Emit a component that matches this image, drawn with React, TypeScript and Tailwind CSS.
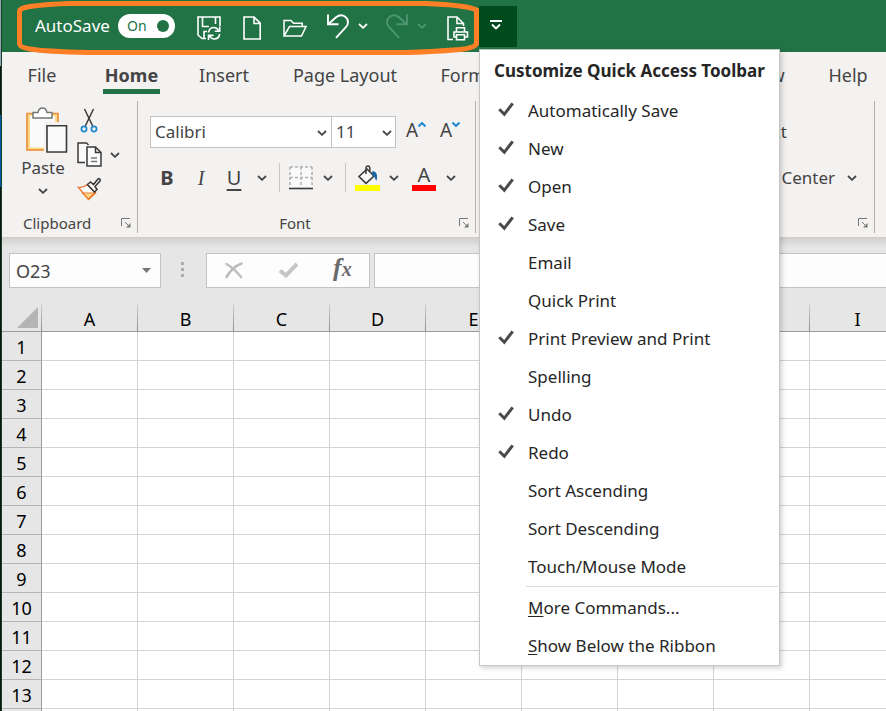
import React, { useState } from "react";

const TABS = [
  { name: "File", width: "w-[80px]" },
  { name: "Home", width: "w-[99px]" },
  { name: "Insert", width: "w-[86px]" },
  { name: "Page Layout", width: "w-[156px]" },
  { name: "Formulas", width: "w-[114px]" },
  { name: "Data", width: "w-[88px]" },
  { name: "Review", width: "w-[92px]" },
  { name: "View", width: "w-[96px]" },
  { name: "Help", width: "w-[70px]" },
];

const COMMANDS = [
  { name: "Automatically Save", on: true },
  { name: "New", on: true },
  { name: "Open", on: true },
  { name: "Save", on: true },
  { name: "Email", on: false },
  { name: "Quick Print", on: false },
  { name: "Print Preview and Print", on: true },
  { name: "Spelling", on: false },
  { name: "Undo", on: true },
  { name: "Redo", on: true },
  { name: "Sort Ascending", on: false },
  { name: "Sort Descending", on: false },
  { name: "Touch/Mouse Mode", on: false },
];

const COLUMNS = ["A", "B", "C", "D", "E", "F", "G", "H", "I"];
const ROWS = Array.from({ length: 13 }, (_, i) => i + 1);

function Chevron({ className = "" }: { className?: string }) {
  return (
    <svg className={className} width="10" height="6" viewBox="0 0 10 6" fill="none" stroke="currentColor" strokeWidth="1.8" aria-hidden="true">
      <path d="M1 1l4 3.800L9 1" />
    </svg>
  );
}

function Launcher({ label }: { label: string }) {
  return (
    <button aria-label={label} className="text-[#777]">
      <svg width="10" height="10" viewBox="0 0 10 10" fill="none" stroke="currentColor" aria-hidden="true">
        <path d="M.5 8V.5H9" />
        <path d="M4 4l4 4" />
        <path d="M9.500 5v4.500H5z" fill="currentColor" stroke="none" />
      </svg>
    </button>
  );
}

function SaveIcon() {
  return (
    <svg width="24" height="24" viewBox="0 0 24 24" fill="none" stroke="currentColor" strokeWidth="1.6" aria-hidden="true">
      <path d="M9 22.500H5L1 19V1h22v9M5.500 1v9.500H12M18.500 1v7M7 22v-6.500h3" />
      <path d="M11.500 16.500c.5-3 2.500-5 5.300-5 2 0 3.700 1 4.700 3M22.700 10.500v4.700h-5M22.700 18c-.5 3-2.700 5-5.500 5-2 0-3.600-1-4.600-3M11.500 24v-4.600h5" />
    </svg>
  );
}

function PageIcon() {
  return (
    <svg width="18" height="24" viewBox="0 0 18 24" fill="none" stroke="currentColor" strokeWidth="1.6" aria-hidden="true">
      <path d="M1 1h10l6.200 6.200V23H1zM11 1v6.500h6.200" />
    </svg>
  );
}

function FolderIcon() {
  return (
    <svg width="24" height="18" viewBox="0 0 24 18" fill="none" stroke="currentColor" strokeWidth="1.5" aria-hidden="true">
      <path d="M1 17V1.500h7l2.500 2.700h8.700v3.300M1 17L6.500 7.500H23L18.500 17z" />
    </svg>
  );
}

function UndoIcon({ flip = false }: { flip?: boolean }) {
  return (
    <svg className={flip ? "-scale-x-100" : ""} width="22" height="25" viewBox="0 0 22 25" fill="none" stroke="currentColor" strokeWidth="1.9" aria-hidden="true">
      <path d="M1 .5v9.700h10.500" />
      <path d="M1.500 10L9 3.300c3-2.500 6.500-2.700 9.300-.5 3.500 2.800 3.500 7.300.6 10.300L9 23.800" />
    </svg>
  );
}

function PrintPreviewIcon() {
  return (
    <svg width="22" height="25" viewBox="0 0 22 25" fill="none" stroke="currentColor" strokeWidth="1.6" aria-hidden="true">
      <path d="M6 23.500H1V1h9l6.500 6.500V10M10 1v6.500h6.500" />
      <path d="M9.500 16v-4.200h8V16M9.500 21H7v-5h13.500v5H18M9.500 18.800h8v5h-8z" />
    </svg>
  );
}

function PasteIcon() {
  return (
    <svg width="42" height="46" viewBox="0 0 42 46" fill="none" aria-hidden="true">
      <path d="M2.500 7.500h28V42h-28z" fill="#fafafa" stroke="#f9d98a" strokeWidth="3" />
      <path d="M19 43H1V6.500h31V17" stroke="#ed8b33" strokeWidth="1.600" />
      <path d="M7 11V5.500h5c.5-3 2-4.500 4.500-4.500S20.500 2.500 21 5.500h5V11z" fill="#fff" stroke="#777" strokeWidth="1.500" />
      <path d="M18 15h24v31H18z" fill="#f3f2f1" />
      <path d="M21 18.800h19.500V45H21z" fill="#fafafa" stroke="#3b3a39" strokeWidth="1.600" />
    </svg>
  );
}

function ScissorsIcon() {
  return (
    <svg width="18" height="25" viewBox="0 0 18 25" fill="none" aria-hidden="true">
      <path d="M4.500 1l8.200 17M13.500 1L5.300 18" stroke="#3b3a39" strokeWidth="1.500" />
      <circle cx="4" cy="21" r="2.600" stroke="#1e88cf" strokeWidth="1.700" />
      <circle cx="14" cy="21" r="2.600" stroke="#1e88cf" strokeWidth="1.700" />
    </svg>
  );
}

function CopyIcon() {
  return (
    <svg width="25" height="25" viewBox="0 0 25 25" fill="none" stroke="#3b3a39" strokeWidth="1.500" aria-hidden="true">
      <path d="M8 20.500H1V1h8.500l2 2" fill="#fafafa" />
      <path d="M10 5h8.500l5.500 5.500V24H10zM18.500 5v5.500H24" fill="#fafafa" />
      <path d="M14 16h6M14 19.500h6" stroke="#777" />
    </svg>
  );
}

function BrushIcon() {
  return (
    <svg width="25" height="25" viewBox="0 0 25 25" fill="none" aria-hidden="true">
      <path d="M1.500 11.500c3.500.3 6.500-.8 9-3l8 8.500-7 6.500z" fill="#fff" stroke="#ed7d31" strokeWidth="1.500" />
      <path d="M5.500 17l12 0-6 6z" fill="#f9d98a" stroke="#ed7d31" strokeWidth="1.200" />
      <path d="M10.500 8.500l3-2.500 3 2.500L21 3c1-1 3 .5 2 2l-5 5.500 2 3-2.500 2.500z" fill="#fafafa" stroke="#3b3a39" strokeWidth="1.600" />
    </svg>
  );
}

function BordersIcon() {
  return (
    <svg width="24" height="24" viewBox="0 0 24 24" fill="none" aria-hidden="true">
      <path d="M1 1h22v20H1z" fill="#fafafa" />
      <path d="M1 1h22M1 11.500h22M1 1v20M12 1v20M23 1v20" stroke="#b0b0b0" strokeWidth="1.500" strokeDasharray="3 2" />
      <path d="M0 22.500h24" stroke="#3b3a39" strokeWidth="1.600" />
    </svg>
  );
}

function FillIcon() {
  return (
    <svg width="25" height="26" viewBox="0 0 25 26" fill="none" aria-hidden="true">
      <path d="M4 11.500L12 4l7 7-8 7.300z" fill="#fafafa" stroke="#3b3a39" strokeWidth="1.600" />
      <path d="M11 9V2.800c0-2 3.500-2.500 3.800 0V6" stroke="#3b3a39" strokeWidth="1.500" />
      <path d="M17 6.500c4-1 6 3 4.700 9-2-.5-1-4-4-4.500z" fill="#1565a7" />
      <path d="M0 20h25v6H0z" fill="#ff0" />
    </svg>
  );
}

function Rule() {
  return <span className="h-[29px] w-px bg-[#c8c6c4]" />;
}

function DropArrow({ label, width }: { label: string; width: string }) {
  return (
    <button aria-label={label} className={`flex h-6 items-center justify-center ${width}`}>
      <Chevron />
    </button>
  );
}

function MenuCheck() {
  return (
    <svg width="16" height="15" viewBox="0 0 16 15" fill="none" stroke="#4a4a4a" strokeWidth="3" aria-hidden="true">
      <path d="M1.300 7.300l5 5L14.700 1.300" />
    </svg>
  );
}

function QuickAccessMenu() {
  const [items, setItems] = useState(COMMANDS);
  return (
    <div role="menu" aria-label="Customize Quick Access Toolbar" className="absolute left-0 top-[43px] z-20 w-[301px] border border-[#c6c6c6] bg-white text-[17px] text-[#262626] shadow-[2px_2px_5px_rgba(0,0,0,0.18)]">
      <h2 className="flex h-[42px] items-center whitespace-nowrap pl-[14px] font-bold">Customize Quick Access Toolbar</h2>
      {items.map((item, i) => (
        <button
          key={item.name}
          role="menuitemcheckbox"
          aria-checked={item.on}
          onClick={() => setItems(items.map((it, j) => (j === i ? { ...it, on: !it.on } : it)))}
          className="flex h-[38px] w-full items-center text-left"
        >
          <span className="flex w-12 pb-1 pl-[18px]">{item.on && <MenuCheck />}</span>
          {item.name}
        </button>
      ))}
      <hr className="mb-[2px] ml-[46px] mr-px border-[#dcdcdc]" />
      <button role="menuitem" className="flex h-[38px] w-full items-center pl-12">
        <span className="underline underline-offset-2">M</span>ore Commands...
      </button>
      <button role="menuitem" className="flex h-[38px] w-full items-center pl-12">
        <span className="underline underline-offset-2">S</span>how Below the Ribbon
      </button>
    </div>
  );
}

function TitleBar() {
  return (
    <header className="relative flex h-[52px] bg-[#217346] pl-[33px] text-white">
      <div className="flex items-center">
        <label htmlFor="autosave" className="w-[83px] whitespace-nowrap text-[17px]">AutoSave</label>
        <span className="relative flex h-6 w-[57px] items-center rounded-full bg-white">
          <input id="autosave" type="checkbox" role="switch" defaultChecked className="absolute inset-0 cursor-pointer opacity-0" />
          <span className="pb-0.5 pl-[9px] text-[14px] text-[#217346]">On</span>
          <span className="ml-auto mr-[6px] size-3 rounded-full bg-[#217346]" />
        </span>
        <div className="ml-[22px] flex items-center gap-[22px] pt-1">
          <button aria-label="Save"><SaveIcon /></button>
          <button aria-label="New"><PageIcon /></button>
          <button aria-label="Open"><FolderIcon /></button>
        </div>
        <button aria-label="Undo" className="ml-5"><UndoIcon /></button>
        <button aria-label="Undo history" className="ml-[9px]"><Chevron /></button>
        <button aria-label="Redo" className="ml-[18px] text-[#4f9570]"><UndoIcon flip /></button>
        <button aria-label="Redo history" className="ml-[9px] text-[#4f9570]"><Chevron /></button>
        <button aria-label="Print Preview and Print" className="ml-5 pt-1"><PrintPreviewIcon /></button>
      </div>
      <div className="relative ml-[10px] mt-[6px] h-[41px]">
        <button aria-label="Customize Quick Access Toolbar" aria-expanded="true" className="flex h-[41px] w-[38px] items-center justify-center bg-[#004b1c] pb-1 pr-1">
          <svg width="12" height="10" viewBox="0 0 12 10" fill="none" stroke="currentColor" strokeWidth="1.800" aria-hidden="true">
            <path d="M0 1h12M2 4.500l4 4 4-4" />
          </svg>
        </button>
        <QuickAccessMenu />
      </div>
      <svg className="pointer-events-none absolute left-0 top-0 z-10" width="480" height="56" viewBox="2 0 480 56" fill="none" stroke="#ff7f27" strokeWidth="5" aria-hidden="true">
        <path d="M19.500 11Q20 8 30 6.500 48 4 70 3.500H426Q466 5 476.500 10V44Q474 48 460 49.500 430 52 405 52.500H88Q45 51.500 30 49 20 47.500 19.500 44Z" />
      </svg>
    </header>
  );
}

function Ribbon() {
  return (
    <section aria-label="Ribbon" className="bg-[#f3f2f1] pb-1 text-[#444]">
      <nav className="flex h-[49px] text-[18px]">
        {TABS.map((t) => (
          <button key={t.name} className={`flex shrink-0 flex-col items-center whitespace-nowrap ${t.width} ${t.name === "Home" ? "font-bold" : ""}`}>
            <span className="flex h-[37px] items-end leading-[28px]">{t.name}</span>
            {t.name === "Home" && <span className="h-[5px] w-[57px] bg-[#217346]" />}
          </button>
        ))}
      </nav>
      <div className="flex h-[132px] text-[17px]">
        <div className="flex w-[136px] shrink-0 flex-col border-r border-[#b3b0ad]">
          <div className="flex grow pl-[20px]">
            <button className="flex w-[42px] flex-col items-center pt-[6px]">
              <span className="ml-2"><PasteIcon /></span>
              <span className="mt-[3px] leading-6">Paste</span>
              <Chevron className="mt-2" />
            </button>
            <div className="ml-[13px] flex flex-col gap-[9px] pt-[7px]">
              <button aria-label="Cut" className="ml-[3px] w-[18px]"><ScissorsIcon /></button>
              <div className="flex items-center">
                <button aria-label="Copy"><CopyIcon /></button>
                <DropArrow label="Copy options" width="w-[25px]" />
              </div>
              <button aria-label="Format Painter" className="w-[25px]"><BrushIcon /></button>
            </div>
          </div>
          <div className="flex h-[18px] items-center justify-between pb-0.5 pl-[21px] pr-[6px] text-[15px]">
            Clipboard
            <Launcher label="Clipboard settings" />
          </div>
        </div>

        <div className="flex w-[338px] shrink-0 flex-col border-r border-[#b3b0ad] pl-3">
          <div className="flex pt-[15px]">
            <div className="relative">
              <select aria-label="Font" className="h-8 w-[182px] appearance-none border border-[#c3c1bf] bg-white pl-1 text-[17px]">
                <option>Calibri</option>
              </select>
              <Chevron className="pointer-events-none absolute right-[5px] top-[14px]" />
            </div>
            <div className="relative -ml-px">
              <select aria-label="Font size" className="h-8 w-[65px] appearance-none border border-[#c3c1bf] bg-white pl-1 text-[17px]">
                <option>11</option>
              </select>
              <Chevron className="pointer-events-none absolute right-1 top-[14px]" />
            </div>
            <button aria-label="Increase font size" className="ml-[10px] flex w-[24px] items-center pb-1 text-[19px]">
              A
              <svg className="mb-3 shrink-0" width="8" height="5" viewBox="0 0 8 5" fill="none" stroke="#1e88cf" strokeWidth="2" aria-hidden="true"><path d="M.5 4.500L4 1l3.500 3.500" /></svg>
            </button>
            <button aria-label="Decrease font size" className="ml-[10px] flex w-[24px] items-center pb-1 text-[19px]">
              A
              <svg className="mb-3 shrink-0" width="8" height="5" viewBox="0 0 8 5" fill="none" stroke="#1e88cf" strokeWidth="2" aria-hidden="true"><path d="M.5 .5L4 4 7.500 .5" /></svg>
            </button>
          </div>
          <div className="mt-[14px] flex h-[30px] items-center text-[20px]">
            <button className="w-[34px] font-bold">B</button>
            <button className="w-[34px] font-['Liberation_Serif',serif] italic">I</button>
            <button className="w-8 underline underline-offset-4">U</button>
            <DropArrow label="Underline style" width="w-[24px]" />
            <span className="ml-[5px] mr-[9px] flex"><Rule /></span>
            <button aria-label="Borders"><BordersIcon /></button>
            <DropArrow label="Border style" width="w-[30px]" />
            <span className="ml-[2px] mr-[9px] flex"><Rule /></span>
            <button aria-label="Fill color"><FillIcon /></button>
            <DropArrow label="Fill color options" width="w-[28px]" />
            <button aria-label="Font color" className="ml-1 flex w-6 flex-col items-center leading-[21px]">
              A
              <span className="h-[6px] w-full bg-[#f00]" />
            </button>
            <DropArrow label="Font color options" width="w-[30px]" />
          </div>
          <div className="mt-auto flex h-[18px] items-center pb-0.5 pr-[6px] text-[15px]">
            <span className="w-[290px] text-center">Font</span>
            <span className="ml-auto flex"><Launcher label="Font settings" /></span>
          </div>
        </div>

        <div className="flex w-[399px] shrink-0 flex-col border-r border-[#b3b0ad]">
          <button className="ml-[233px] mt-[18px] flex h-[26px] w-[78px] items-center justify-end whitespace-nowrap">Wrap Text</button>
          <div className="ml-[233px] mt-[20px] flex items-center">
            <button className="flex h-[26px] w-[126px] items-center justify-end whitespace-nowrap">Merge &amp; Center</button>
            <DropArrow label="Merge options" width="w-[33px]" />
          </div>
          <div className="mt-auto flex h-[18px] items-center pb-0.5 pr-[6px] text-[15px]">
            <span className="grow text-center">Alignment</span>
            <Launcher label="Alignment settings" />
          </div>
        </div>
      </div>
    </section>
  );
}

function FormulaBar() {
  return (
    <div className="flex h-[66px] bg-[#e6e6e6] bg-[linear-gradient(#cfcecc,#e6e6e6_10px)] pl-[7px] pt-4">
      <div className="relative flex h-[35px] w-[152px] items-center">
        <input aria-label="Name box" defaultValue="O23" className="size-full border border-[#c3c3c3] bg-[#fdfdfd] px-[6px] text-[18px] text-[#444]" />
        <svg className="absolute right-[10px]" width="9" height="5" viewBox="0 0 9 5" aria-hidden="true"><path d="M0 0h9L4.500 5z" fill="#777" /></svg>
      </div>
      <div className="flex h-[35px] w-[45px] flex-col items-center justify-center gap-[3px] pb-0.5 pr-0.5">
        <span className="size-[3px] bg-[#adadad]" />
        <span className="size-[3px] bg-[#adadad]" />
        <span className="size-[3px] bg-[#adadad]" />
      </div>
      <div className="flex h-[35px] w-[164px] shrink-0 items-center border border-[#c3c3c3] bg-[#fdfdfd]">
        <button aria-label="Cancel" className="ml-[18px]">
          <svg width="18" height="17" viewBox="0 0 18 17" fill="none" stroke="#bdbdbd" strokeWidth="2.500" strokeLinecap="round" aria-hidden="true"><path d="M1.500 2C7 5 12 10 16 15M16.500 1.500C10 4 5 9 1.500 15" /></svg>
        </button>
        <button aria-label="Enter" className="ml-9">
          <svg width="19" height="17" viewBox="0 0 19 17" fill="none" stroke="#c6c6c6" strokeWidth="4" aria-hidden="true"><path d="M1 8.500l6 5L18 2" /></svg>
        </button>
        <button aria-label="Insert function" className="ml-[35px] pb-1 font-['Liberation_Serif',serif] text-[26px] font-bold italic leading-6 text-[#6a6a6a]">
          f<span className="text-[20px]">x</span>
        </button>
      </div>
      <input aria-label="Formula" className="ml-1 h-[35px] min-w-0 grow border border-r-0 border-[#c3c3c3] bg-[#fdfdfd] px-2" />
    </div>
  );
}

function SheetRow({ label }: { label?: number }) {
  return (
    <tr className="h-[29px]">
      <th scope="row" className="border-b border-r border-b-[#b4b4b4] border-r-[#9b9b9b] bg-[#e6e6e6] p-0 pt-0.5 font-normal">{label}</th>
      {COLUMNS.map((c) => (
        <td key={c} className="border-b border-r border-[#d4d4d4] p-0" />
      ))}
    </tr>
  );
}

function Sheet() {
  return (
    <div className="overflow-hidden bg-white">
      <table className="w-[904px] table-fixed border-separate border-spacing-0 text-[18px] leading-6 text-black">
        <thead>
          <tr className="h-[29px] bg-[#e6e6e6]">
            <th className="w-10 border-b border-[#9b9b9b] bg-[linear-gradient(to_top,#8f8f8f,#d4d4d4)] bg-[length:1px_100%] bg-right bg-no-repeat p-0">
              <svg className="ml-[15px]" width="21" height="21" viewBox="0 0 21 21" role="img" aria-label="Select all"><path d="M21 0v21H0z" fill="#b4b4b4" /></svg>
            </th>
            {COLUMNS.map((c) => (
              <th key={c} scope="col" className="w-24 border-b border-[#9b9b9b] bg-[linear-gradient(to_top,#8f8f8f,#d4d4d4)] bg-[length:1px_100%] bg-right bg-no-repeat p-0 pr-px pt-1 font-normal">{c}</th>
            ))}
          </tr>
        </thead>
        <tbody>
          {ROWS.map((r) => (
            <SheetRow key={r} label={r} />
          ))}
          <SheetRow />
        </tbody>
      </table>
    </div>
  );
}

export default function App() {
  return (
    <div className="flex h-screen overflow-hidden bg-white font-['Noto_Sans','Open_Sans',sans-serif]">
      <div className="flex w-[2px] shrink-0 border-r border-[#0e4527] bg-[linear-gradient(#9aa3b5_66px,#111_66px,#111_115px,#0a5aa8_115px,#0a5aa8_187px,#111_187px)]" />
      <main className="min-w-0 grow">
        <TitleBar />
        <Ribbon />
        <FormulaBar />
        <Sheet />
      </main>
    </div>
  );
}
